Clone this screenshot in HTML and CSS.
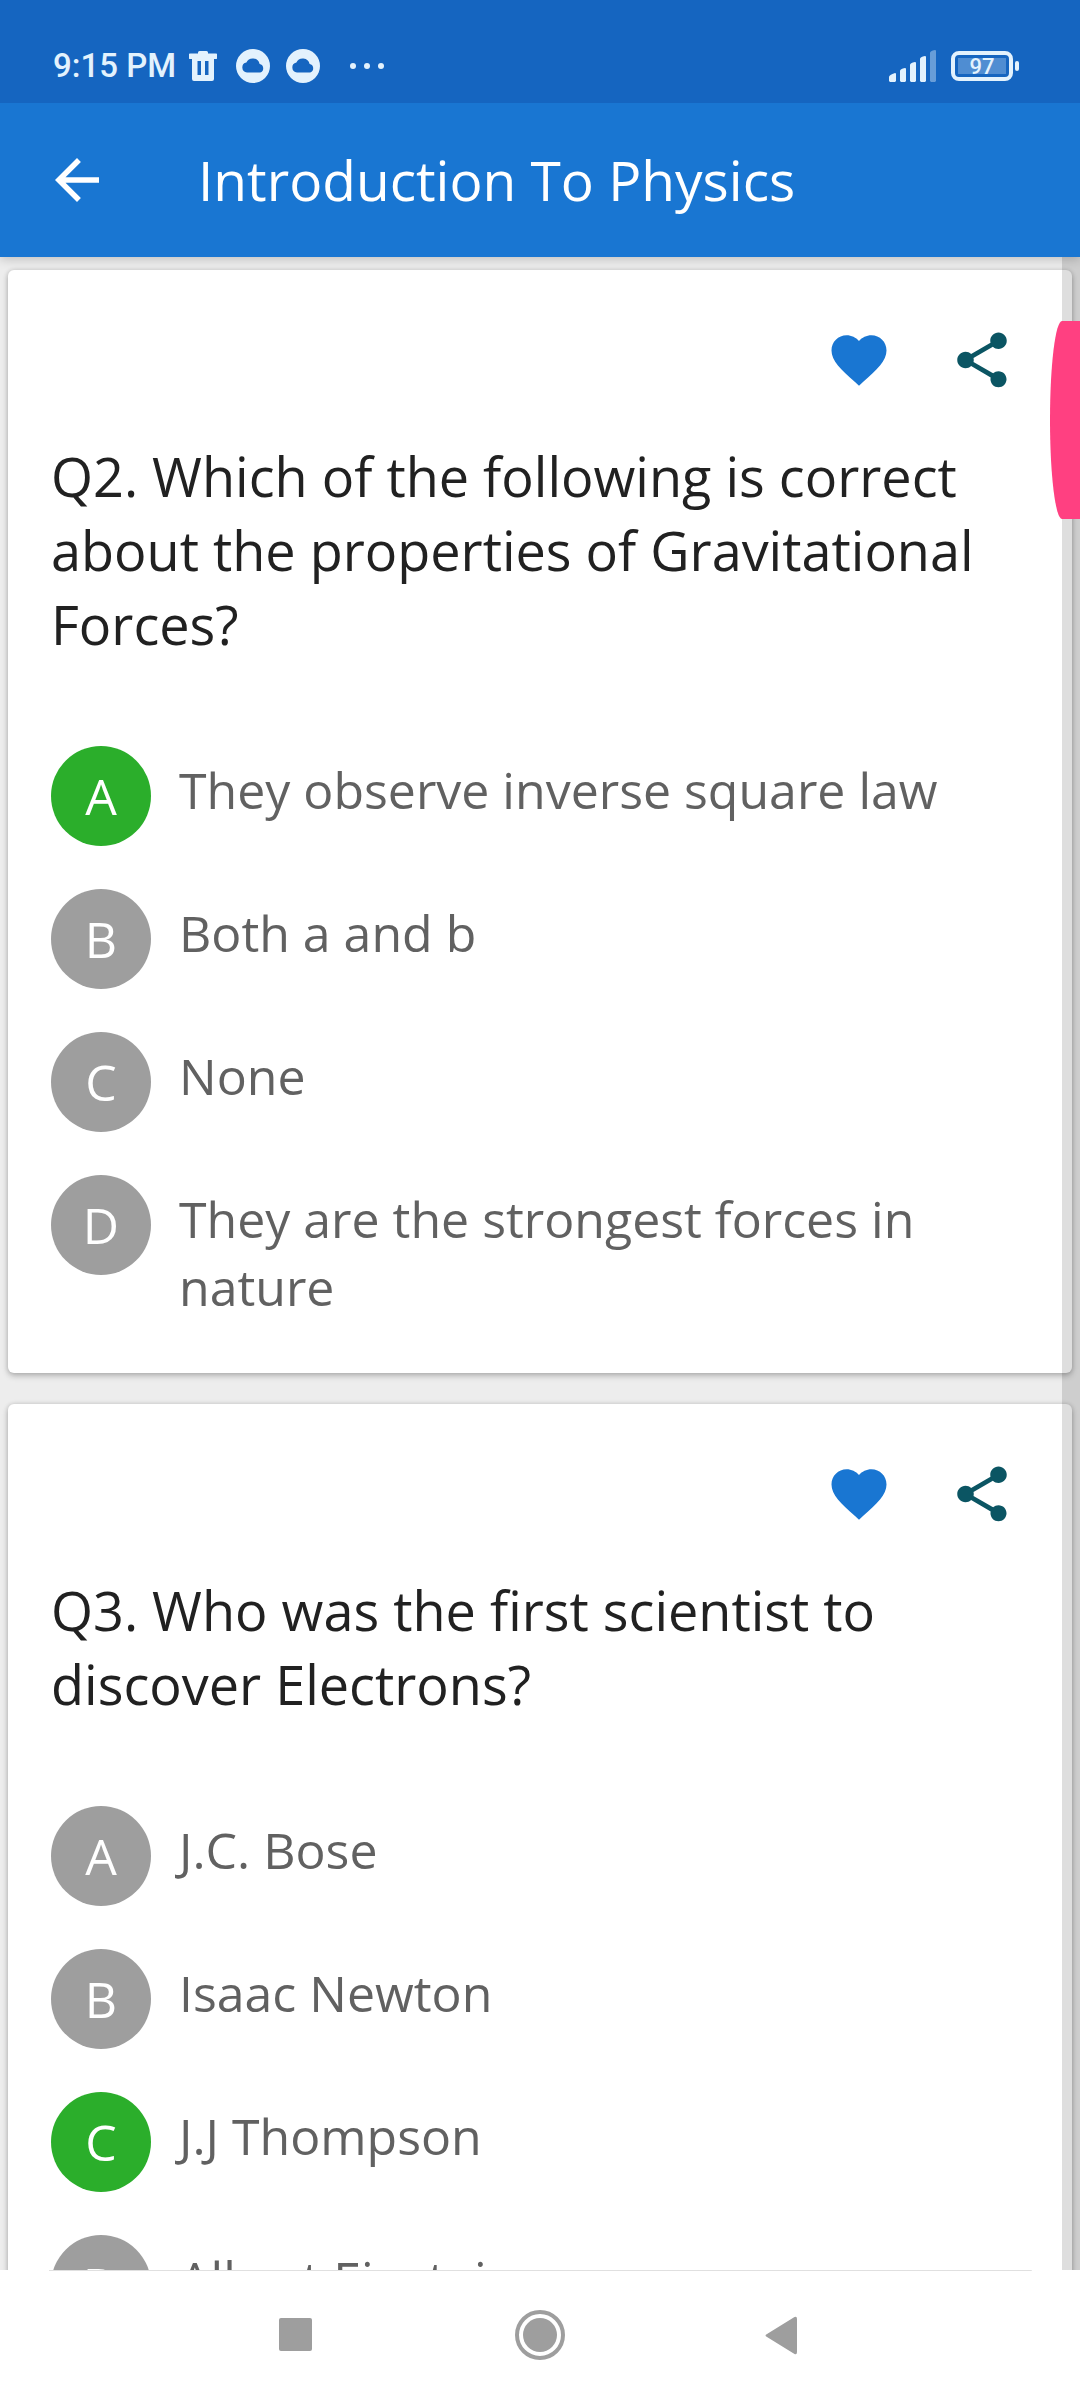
FILE: index.html
```html
<!DOCTYPE html>
<html lang="en">
<head>
    <meta charset="UTF-8">
    <meta name="viewport" content="width=device-width, initial-scale=1.0">
    <title>Introduction To Physics</title>
    <link rel="stylesheet" href="styles.css">
</head>
<body>
    <!-- shared icons -->
    <svg class="icon-defs" aria-hidden="true">
        <symbol id="heart" viewBox="0 0 24 24">
            <path d="M12 21.35l-1.45-1.32C5.4 15.36 2 12.28 2 8.5 2 5.42 4.42 3 7.5 3c1.74 0 3.41.81 4.5 2.09C13.09 3.81 14.76 3 16.5 3 19.58 3 22 5.42 22 8.5c0 3.78-3.4 6.86-8.55 11.54L12 21.35z"/>
        </symbol>
        <symbol id="share" viewBox="0 0 24 24">
            <path d="M18 16.08c-.76 0-1.44.3-1.96.77L8.91 12.7c.05-.23.09-.46.09-.7s-.04-.47-.09-.7l7.05-4.11c.54.5 1.25.81 2.04.81 1.66 0 3-1.34 3-3s-1.34-3-3-3-3 1.34-3 3c0 .24.04.47.09.7L8.04 9.81C7.5 9.31 6.79 9 6 9c-1.66 0-3 1.34-3 3s1.34 3 3 3c.79 0 1.5-.31 2.04-.81l7.12 4.16c-.05.21-.08.43-.08.65 0 1.61 1.31 2.92 2.92 2.92s2.92-1.31 2.92-2.92-1.31-2.92-2.92-2.92z"/>
        </symbol>
        <symbol id="cloud" viewBox="0 0 34 34">
            <path fill-rule="evenodd" d="M17 0a17 17 0 1 0 0 34 17 17 0 0 0 0-34zM11 23.500a5 5 0 0 1-.6-9.900 7 7 0 0 1 13.200 1.400 4.400 4.400 0 0 1 .6 8.500z"/>
        </symbol>
    </svg>

    <header>
        <div class="status-bar">
            <div class="status-left">
                <span class="clock">9:15 PM</span>
                <svg class="trash" viewBox="0 0 28 30">
                    <path fill-rule="evenodd" d="M9 2.500V1.500Q9 0 10.500 0h7Q19 0 19 1.500v1h7.500a1.500 1.500 0 0 1 0 5.500H25v20q0 2-2 2H5q-2 0-2-2V8H1.500a1.500 1.500 0 0 1 0-5.500zM8.500 10v14h3.500V10zM16 10v14h3.500V10z"/>
                </svg>
                <svg class="cloud"><use href="#cloud"/></svg>
                <svg class="cloud"><use href="#cloud"/></svg>
                <svg class="dots" viewBox="0 0 34 6">
                    <circle cx="3" cy="3" r="3"/>
                    <circle cx="17" cy="3" r="3"/>
                    <circle cx="31" cy="3" r="3"/>
                </svg>
            </div>
            <div class="status-right">
                <svg class="signal" viewBox="0 0 48 32">
                    <path d="M0 27q0-2 6-4 1 0 1 1v7l-1 1H1l-1-1z"/>
                    <path d="M11 21q0-2 5-3 1 0 1 1v12l-1 1h-4l-1-1z"/>
                    <path d="M21 15q0-2 5-3 1 0 1 1v18l-1 1h-4l-1-1z"/>
                    <path d="M31 9q0-2 5-3 1 0 1 1v24l-1 1h-4l-1-1z"/>
                    <path opacity=".4" d="M41 3q0-2 5-3 1 0 1 1v30l-1 1h-4l-1-1z"/>
                </svg>
                <div class="battery"><span class="battery-level">97</span></div>
            </div>
        </div>
        <div class="app-bar">
            <button class="icon-button back" aria-label="Back">
                <svg viewBox="0 0 24 24"><path d="M20 11H7.830l5.590-5.590L12 4l-8 8 8 8 1.410-1.410L7.830 13H20v-2z"/></svg>
            </button>
            <h1>Introduction To Physics</h1>
        </div>
    </header>

    <div class="content">
        <main class="questions">
            <section class="card">
                <div class="actions">
                    <button class="icon-button like" aria-label="Favourite"><svg><use href="#heart"/></svg></button>
                    <button class="icon-button share" aria-label="Share"><svg><use href="#share"/></svg></button>
                </div>
                <h2>Q2. Which of the following is correct about the properties of Gravitational Forces?</h2>
                <div class="options">
                    <button class="option correct"><span class="letter">A</span><span class="answer">They observe inverse square law</span></button>
                    <button class="option"><span class="letter">B</span><span class="answer">Both a and b</span></button>
                    <button class="option"><span class="letter">C</span><span class="answer">None</span></button>
                    <button class="option"><span class="letter">D</span><span class="answer">They are the strongest forces in nature</span></button>
                </div>
            </section>

            <section class="card">
                <div class="actions">
                    <button class="icon-button like" aria-label="Favourite"><svg><use href="#heart"/></svg></button>
                    <button class="icon-button share" aria-label="Share"><svg><use href="#share"/></svg></button>
                </div>
                <h2>Q3. Who was the first scientist to discover Electrons?</h2>
                <div class="options">
                    <button class="option"><span class="letter">A</span><span class="answer">J.C. Bose</span></button>
                    <button class="option"><span class="letter">B</span><span class="answer">Isaac Newton</span></button>
                    <button class="option correct"><span class="letter">C</span><span class="answer">J.J Thompson</span></button>
                    <button class="option"><span class="letter">D</span><span class="answer">Albert Einstein</span></button>
                </div>
            </section>
        </main>
        <div class="scroll-track"></div>
        <div class="scroll-thumb"></div>
    </div>

    <nav class="nav-bar">
        <button aria-label="Recent apps">
            <svg viewBox="0 0 50 50"><rect x="9" y="8" width="33" height="33" rx="2"/></svg>
        </button>
        <button aria-label="Home">
            <svg viewBox="0 0 50 50">
                <circle cx="25" cy="25" r="23" fill="none" stroke="#9e9e9e" stroke-width="4"/>
                <circle cx="25" cy="25" r="17"/>
            </svg>
        </button>
        <button aria-label="Back">
            <svg viewBox="0 0 50 50"><path d="M7 24L34.500 7Q37 6 37 9v33q0 3-2.500 2L7 27q-3-1.500 0-3z"/></svg>
        </button>
    </nav>
</body>
</html>
```
FILE: styles.css
```css
* {
    box-sizing: border-box;
}

body {
    display: flex;
    flex-direction: column;
    height: 100vh;
    margin: 0;
    font-family: 'Open Sans', 'Noto Sans', sans-serif;
    background-color: #ededed;
    color: #212121;
}

button {
    padding: 0;
    border: none;
    background: none;
    font: inherit;
    color: inherit;
    text-align: left;
    cursor: pointer;
}

svg {
    display: block;
    fill: currentColor;
}

.icon-defs {
    display: none;
}

/* header */
header {
    position: relative;
    z-index: 1;
    flex: none;
    box-shadow: 0 2px 10px rgba(0, 0, 0, 0.2);
}

.status-bar {
    display: flex;
    justify-content: space-between;
    height: 103px;
    padding: 29px 61px 0 53px;
    background-color: #1565c0;
    color: #e3f2fd;
    font-family: Roboto, sans-serif;
    font-weight: 500;
}

.status-left,
.status-right {
    display: flex;
    align-items: center;
}

.clock {
    margin-right: 13px;
    font-size: 33px;
    line-height: 40px;
}

.trash {
    width: 28px;
    height: 30px;
    margin-right: 19px;
}

.cloud {
    width: 34px;
    height: 34px;
    margin-right: 16px;
}

.dots {
    width: 34px;
    height: 6px;
    margin-left: 14px;
}

.signal {
    width: 48px;
    height: 32px;
    margin-right: 14px;
}

.battery {
    position: relative;
    width: 62px;
    height: 30px;
    margin-right: 6px;
    padding: 3px;
    border: 4px solid #e3f2fd;
    border-radius: 8px;
}

.battery::after {
    content: "";
    position: absolute;
    top: 6px;
    right: -10px;
    width: 4px;
    height: 10px;
    border-radius: 2px;
    background-color: #e3f2fd;
}

.battery-level {
    display: block;
    height: 16px;
    background-color: #4f8dd2;
    font-size: 22px;
    line-height: 18px;
    text-align: center;
}

.app-bar {
    display: flex;
    align-items: center;
    gap: 88px;
    height: 154px;
    padding: 0 44px;
    background-color: #1976d2;
    color: #fff;
}

h1 {
    margin: 0;
    font-size: 55px;
    font-weight: 400;
    line-height: 74px;
}

.icon-button,
.icon-button svg {
    width: 66px;
    height: 66px;
}

/* question list */
.content {
    position: relative;
    flex: 1;
    min-height: 0;
}

.questions {
    display: flex;
    flex-direction: column;
    gap: 31px;
    height: 100%;
    padding: 13px 8px;
    overflow-y: auto;
    scrollbar-width: none;
}

.card {
    flex: none;
    padding: 57px 57px 52px 43px;
    border-radius: 6px;
    background-color: #fff;
    box-shadow: 0 3px 6px rgba(0, 0, 0, 0.22), 0 0 5px rgba(0, 0, 0, 0.14);
}

.actions {
    display: flex;
    justify-content: flex-end;
    gap: 57px;
    margin-bottom: 46px;
}

.like {
    color: #1976d2;
}

.share {
    color: #0b5563;
}

h2 {
    margin: 0 0 85px;
    font-size: 54px;
    font-weight: 400;
    line-height: 74px;
}

.options {
    display: flex;
    flex-direction: column;
    gap: 43px;
}

.option {
    display: flex;
    align-items: flex-start;
    gap: 28px;
    font-size: 50px;
    line-height: 68px;
}

.letter {
    display: flex;
    flex: none;
    align-items: center;
    justify-content: center;
    width: 100px;
    height: 100px;
    border-radius: 50%;
    background-color: #9e9e9e;
    color: #fff;
}

.correct .letter {
    background-color: #2bae2b;
}

.answer {
    padding-top: 10px;
    color: #616161;
}

/* fast scroller over the list */
.scroll-track {
    position: absolute;
    top: 0;
    right: 0;
    bottom: 0;
    width: 18px;
    background-color: rgba(0, 0, 0, 0.13);
}

.scroll-thumb {
    position: absolute;
    top: 64px;
    right: 0;
    width: 30px;
    height: 198px;
    border-radius: 12px 0 0 12px / 99px 0 0 99px;
    background-color: #ff4081;
}

/* system navigation */
.nav-bar {
    display: grid;
    grid-template-columns: repeat(3, 1fr);
    flex: none;
    height: 130px;
    padding: 0 16%;
    background: linear-gradient(#e0e0e0, #e0e0e0) center top / 91% 1px no-repeat #fff;
    color: #9e9e9e;
}

.nav-bar button {
    display: flex;
    align-items: center;
    justify-content: center;
}

.nav-bar svg {
    width: 50px;
    height: 50px;
}
```
